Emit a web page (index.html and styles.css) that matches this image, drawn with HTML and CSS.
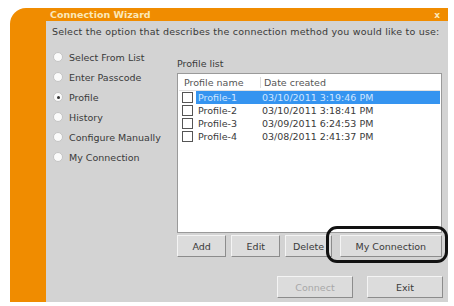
FILE: index.html
```html
<!DOCTYPE html>
<html lang="en">
<head>
    <meta charset="UTF-8">
    <title>Connection Wizard</title>
    <link rel="stylesheet" href="styles.css">
</head>
<body>
    <div class="window">
        <div class="titlebar">
            <span class="title">Connection Wizard</span>
            <span class="close">x</span>
        </div>
        <div class="panel">
            <p class="prompt">Select the option that describes the connection method you would like to use:</p>
            <div class="columns">
                <ul class="options">
                    <li><span class="radio"></span>Select From List</li>
                    <li><span class="radio"></span>Enter Passcode</li>
                    <li><span class="radio checked"></span>Profile</li>
                    <li><span class="radio"></span>History</li>
                    <li><span class="radio"></span>Configure Manually</li>
                    <li><span class="radio"></span>My Connection</li>
                </ul>
                <div class="profiles">
                    <div class="label">Profile list</div>
                    <div class="listbox">
                        <div class="row head">
                            <div class="col-name">Profile name</div>
                            <div class="col-date">Date created</div>
                        </div>
                        <div class="row selected">
                            <span class="check"></span>
                            <div class="cells"><div class="col-name">Profile-1</div><div class="col-date">03/10/2011 3:19:46 PM</div></div>
                        </div>
                        <div class="row">
                            <span class="check"></span>
                            <div class="cells"><div class="col-name">Profile-2</div><div class="col-date">03/10/2011 3:18:41 PM</div></div>
                        </div>
                        <div class="row">
                            <span class="check"></span>
                            <div class="cells"><div class="col-name">Profile-3</div><div class="col-date">03/09/2011 6:24:53 PM</div></div>
                        </div>
                        <div class="row">
                            <span class="check"></span>
                            <div class="cells"><div class="col-name">Profile-4</div><div class="col-date">03/08/2011 2:41:37 PM</div></div>
                        </div>
                    </div>
                    <div class="list-buttons">
                        <button class="btn w-add">Add</button>
                        <button class="btn w-edit">Edit</button>
                        <button class="btn w-del">Delete</button>
                        <button class="btn w-my">My Connection</button>
                        <div class="callout"></div>
                    </div>
                </div>
            </div>
            <div class="footer">
                <button class="btn w-foot disabled">Connect</button>
                <button class="btn w-foot">Exit</button>
            </div>
        </div>
    </div>
</body>
</html>
```

FILE: styles.css
```css
body { margin: 0; background: #fff; font-family: "DejaVu Sans", Tahoma, sans-serif; font-size: 9.5px; color: #3a3a3a; }

.window {
    margin: 8px 0 0 10px; width: 438px; height: 294px;
    background: #f08c00; border-top-left-radius: 16px;
    display: flex; flex-direction: column;
}
.titlebar { height: 13px; display: flex; align-items: center; justify-content: space-between; padding: 0 8px 0 40px; }
.title { color: #fbe7b8; font-weight: bold; font-size: 9.5px; }
.close { color: #fbe7b8; font-weight: bold; font-size: 9px; }

.panel { flex: 1; margin-left: 36px; background: #d3d3d3; padding: 5px 0 0 6px; display: flex; flex-direction: column; }
.prompt { margin: 0; height: 12px; line-height: 12px; white-space: nowrap; letter-spacing: 0.2px; }

.columns { display: flex; }
.options { list-style: none; margin: 9px 0 0 0; padding: 0; width: 125px; }
.options li { height: 20px; display: flex; align-items: center; }
.radio {
    width: 8px; height: 8px; border-radius: 50%; background: #fbfbfb;
    border: 1px solid #c4c4c4; margin: 0 6px 0 1px; position: relative;
}
.radio.checked::after {
    content: ""; position: absolute; left: 2.5px; top: 2.5px; width: 3px; height: 3px;
    border-radius: 50%; background: #333;
}

.profiles { width: 265px; }
.label { margin-top: 19px; height: 16px; line-height: 14px; }
.listbox { height: 160px; background: #fff; border: 1px solid #9a9a9a; padding: 1px 1px 0 4px; box-sizing: border-box; }
.row { display: flex; align-items: center; height: 13px; }
.row.head { height: 15px; border-bottom: 1px solid #e2e2e2; margin-left: -3px; padding-left: 3px; color: #555; }
.row.head .col-name { width: 76px; border-right: 1px solid #ddd; padding-left: 2px; }
.row.head .col-date { padding-left: 3px; }
.check { width: 9px; height: 9px; border: 1px solid #555; background: #fff; margin-right: 3px; flex: none; }
.cells { flex: 1; display: flex; height: 13px; align-items: center; }
.cells .col-name { width: 64px; padding-left: 2px; }
.selected .cells { background: #3594f0; color: #cfe6ff; }

.list-buttons { display: flex; gap: 5px; margin-top: 2px; position: relative; }
.btn {
    font-family: inherit; font-size: 9.5px; color: #3a3a3a; height: 22px;
    background: #dcdcdc; border: 1px solid; border-color: #f4f4f4 #8c8c8c #8c8c8c #f4f4f4;
    padding: 0;
}
.w-add { width: 50px; }
.w-edit { width: 50px; }
.w-del { width: 47px; }
.w-my { width: 104px; margin-left: 3px; }
.callout {
    position: absolute; left: 149px; top: -9px; width: 122px; height: 37px;
    border: 3px solid #111; border-radius: 11px; box-sizing: border-box;
}

.footer { display: flex; justify-content: flex-end; gap: 14px; margin-top: 19px; padding-right: 5px; }
.w-foot { width: 76px; }
.btn.disabled { color: #a8a8a8; }
```
